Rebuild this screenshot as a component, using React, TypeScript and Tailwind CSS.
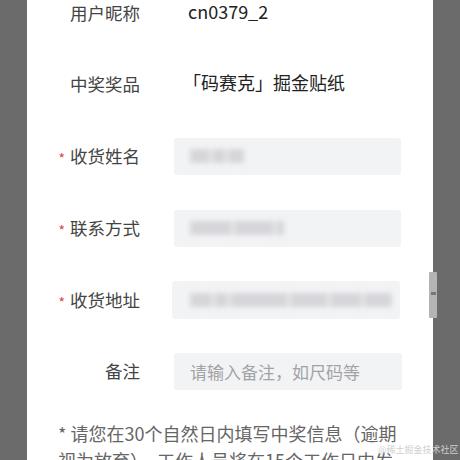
import React from 'react';

const font = { fontFamily: '"Noto Sans CJK SC", "Noto Sans", sans-serif' };

function Label({ text, required }: { text: string; required?: boolean }) {
  return (
    <div className="flex w-[115px] shrink-0 items-center justify-end pr-[2px]">
      {required && <span className="mr-[5px] mt-[4px] text-[14px] leading-none text-[#e0463e]">*</span>}
      <span className="text-[17.5px] text-[#444]">{text}</span>
    </div>
  );
}

function Blur({ widths }: { widths: number[] }) {
  return (
    <div className="flex items-center gap-[2px] blur-[2.5px]">
      {widths.map((w, i) => (
        <div key={i} className="h-[14px] bg-[#d6d6da]" style={{ width: w }} />
      ))}
    </div>
  );
}

export default function App() {
  return (
    <div className="relative flex h-[460px] w-[460px] overflow-hidden bg-[#6b6b6b]" style={font}>
      <div className="relative ml-[27px] h-full w-[406px] bg-white">
        <div className="-mt-[22px] flex flex-col">
          <div className="flex h-[71px] items-center">
            <Label text="用户昵称" />
            <div className="-mt-[4px] pl-[46px] text-[18px] text-[#222]">cn0379_2</div>
          </div>
          <div className="flex h-[71px] items-center">
            <Label text="中奖奖品" />
            <div className="-mt-[4px] pl-[41px] text-[18px] text-[#222]">「码赛克」掘金贴纸</div>
          </div>
          <div className="flex h-[72px] items-center">
            <Label text="收货姓名" required />
            <div className="ml-[32px] flex h-[37px] w-[227px] items-center rounded-[3px] bg-[#f2f3f5] pl-[16px]">
              <Blur widths={[20, 14, 16]} />
            </div>
          </div>
          <div className="flex h-[72px] items-center">
            <Label text="联系方式" required />
            <div className="ml-[32px] flex h-[37px] w-[227px] items-center rounded-[3px] bg-[#f2f3f5] pl-[16px]">
              <Blur widths={[42, 40, 8]} />
            </div>
          </div>
          <div className="flex h-[72px] items-center">
            <Label text="收货地址" required />
            <div className="ml-[30px] flex h-[38px] w-[228px] items-center rounded-[3px] bg-[#f2f3f5] pl-[18px]">
              <Blur widths={[22, 14, 58, 38, 32, 28]} />
            </div>
          </div>
          <div className="flex h-[70px] items-center">
            <Label text="备注" />
            <div className="ml-[32px] mt-[1px] flex h-[37px] w-[228px] items-center rounded-[3px] bg-[#f2f3f5] pl-[16px] text-[17px] text-[#a3a3a6]">
              请输入备注，如尺码等
            </div>
          </div>
          <div className="mt-[14px] w-[372px] pl-[31px] text-[18px] leading-[27px] text-[#666]">
            * 请您在30个自然日内填写中奖信息（逾期视为放弃），工作人员将在15个工作日内发放奖品
          </div>
        </div>
        <div className="absolute left-[402px] top-[272px] h-[46px] w-[8px] rounded-[1px] bg-[#b4b4b4]">
          <div className="absolute left-[2px] top-[20px] h-[3px] w-[5px] bg-[#777]" />
        </div>
      </div>
      <div className="absolute left-[378px] top-[445px] whitespace-nowrap text-[9px] leading-none text-[#cfcfcf]">@稀土掘金技术社区</div>
    </div>
  );
}
